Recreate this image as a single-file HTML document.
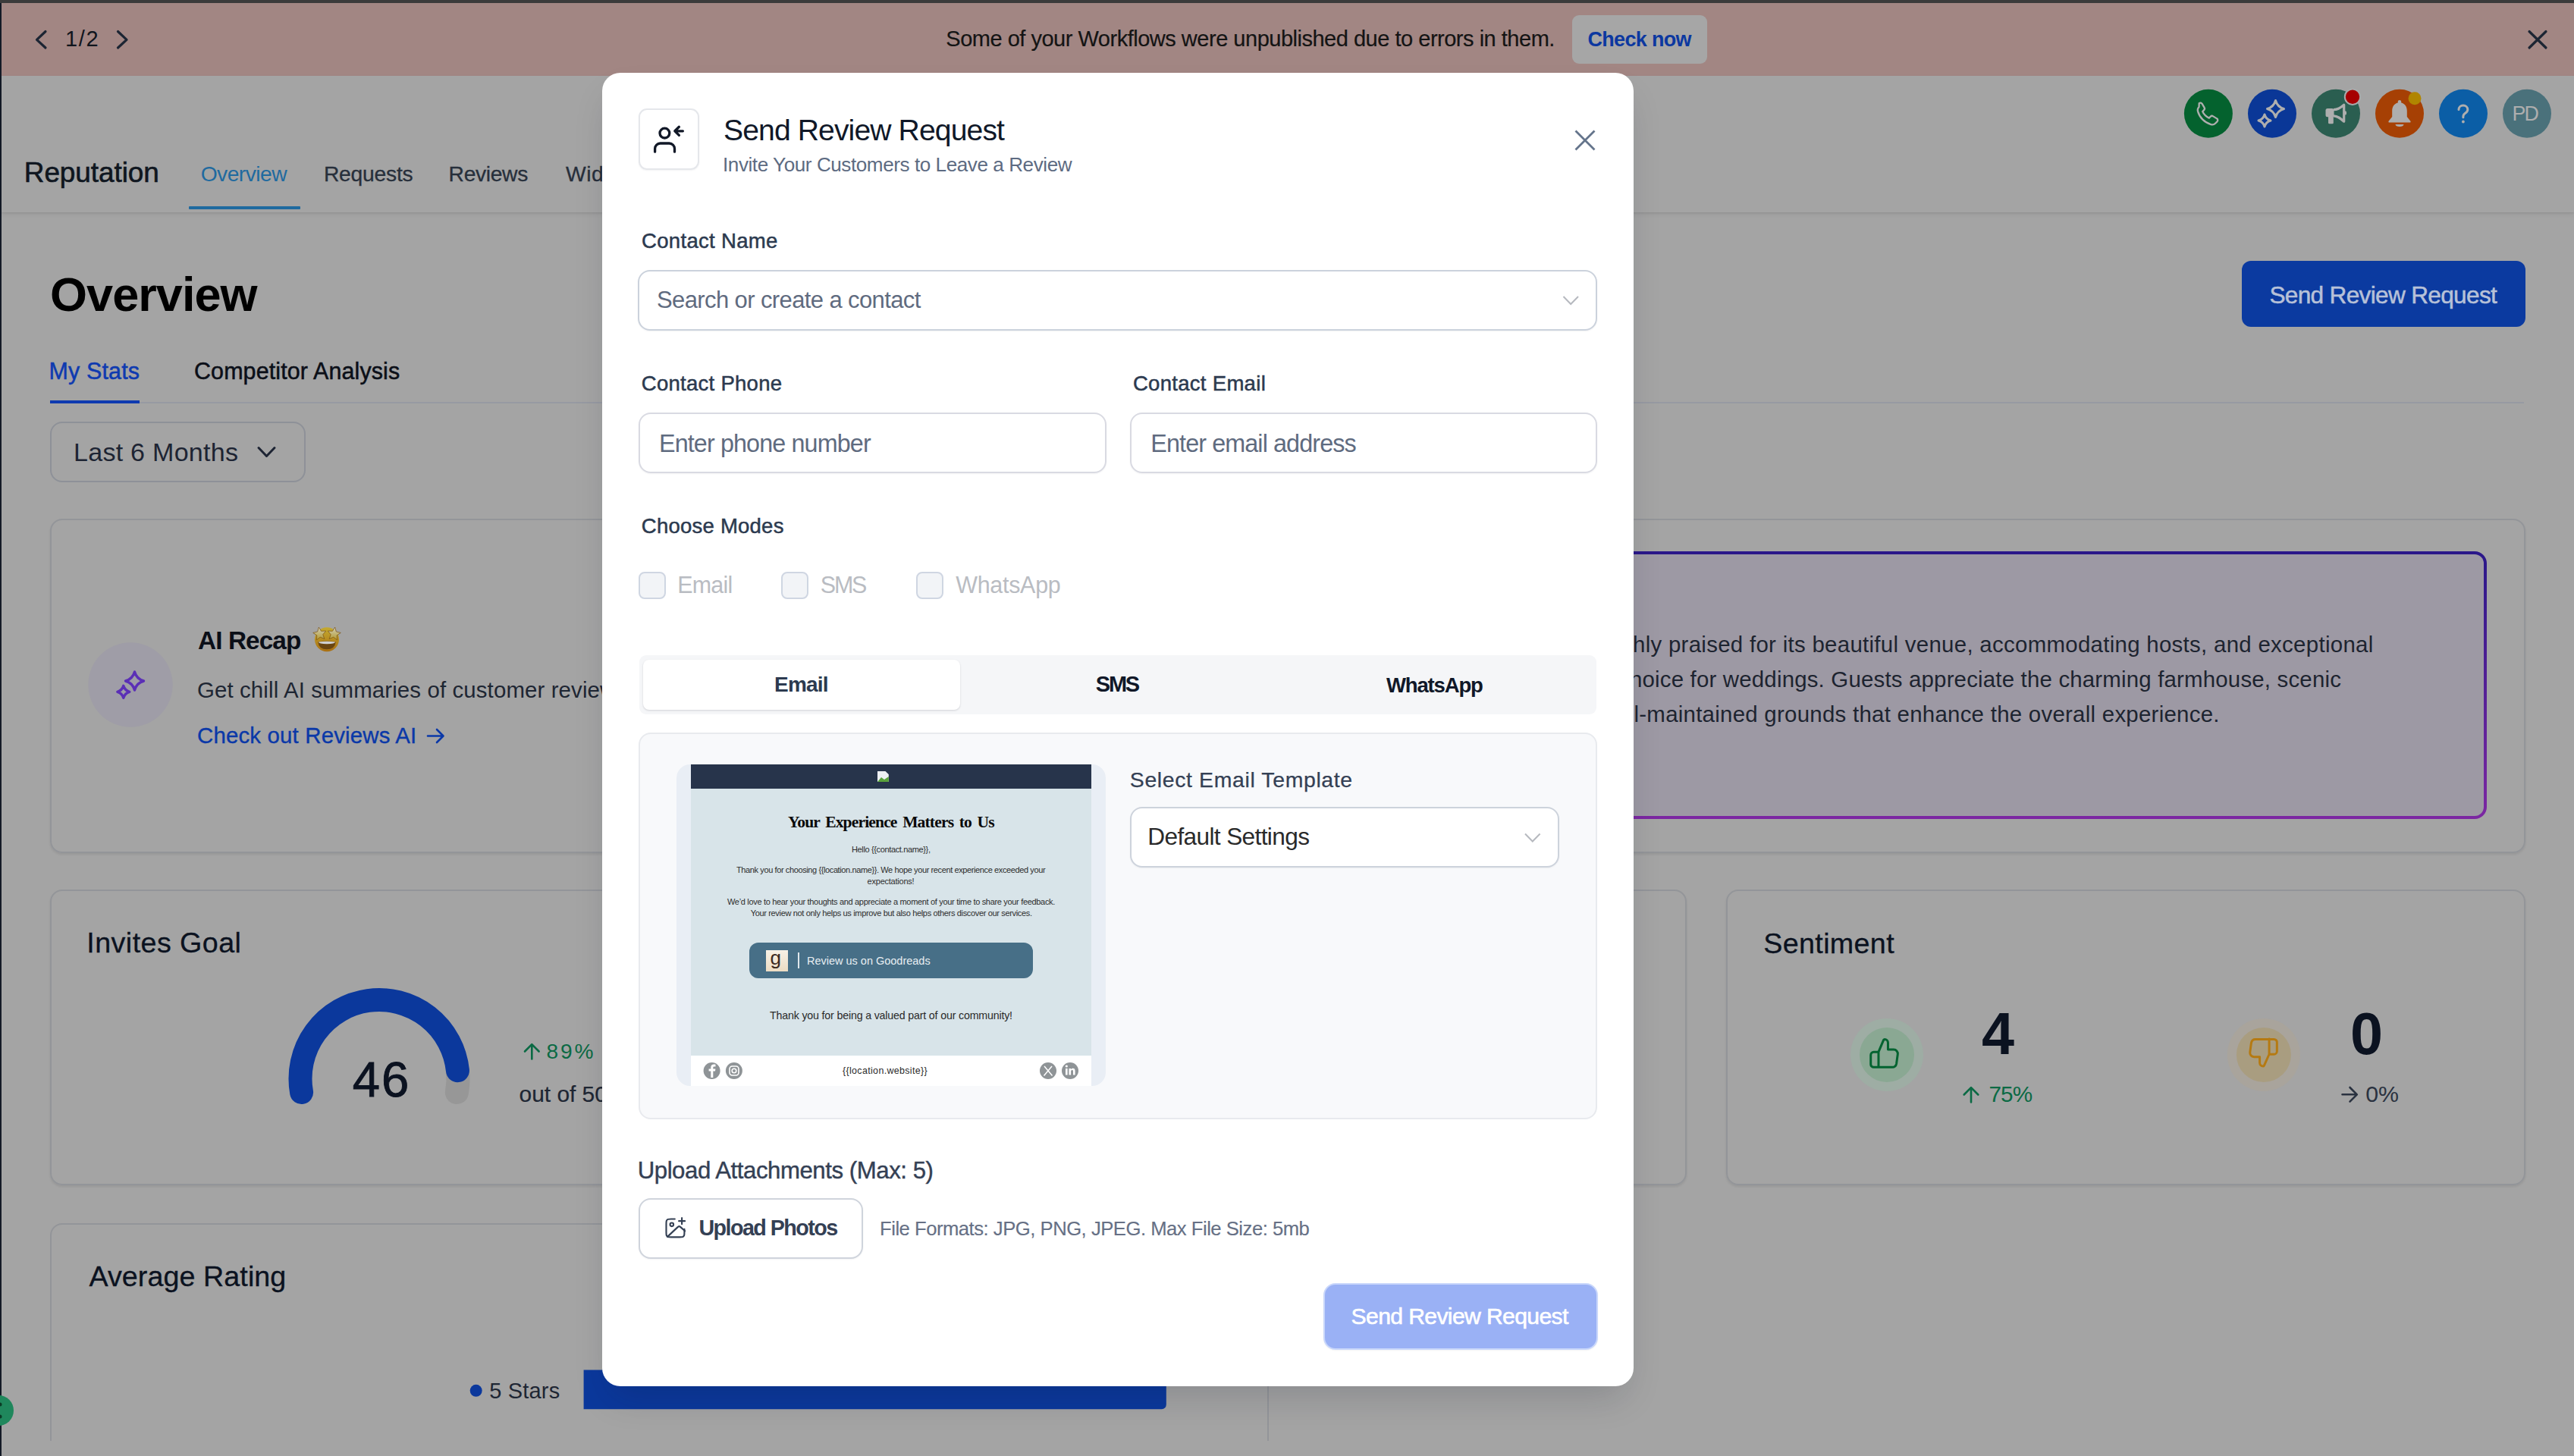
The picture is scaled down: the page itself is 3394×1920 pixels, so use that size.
<!DOCTYPE html>
<html><head><meta charset="utf-8"><style>
html,body{margin:0;padding:0;}
body{width:3394px;height:1920px;overflow:hidden;position:relative;background:#a4a4a4;font-family:'Liberation Sans',sans-serif;}
.a{position:absolute;box-sizing:border-box;}
.t{position:absolute;white-space:nowrap;}
svg{position:absolute;overflow:visible;}
</style></head><body>
<div class="a " style="left:0px;top:0px;width:3394px;height:4px;background:#3b3b3b;"></div>
<div class="a " style="left:0px;top:4px;width:2px;height:1916px;background:#131a26;"></div>
<div class="a " style="left:2px;top:4px;width:3392px;height:96px;background:#a28683;"></div>
<svg style="left:0;top:0" width="3394" height="100"><path d="M60 41.5 L48.5 52.3 L60 63" fill="none" stroke="#1c2533" stroke-width="3.2" stroke-linecap="round" stroke-linejoin="round"/><path d="M155.5 41.5 L167 52.3 L155.5 63" fill="none" stroke="#1c2533" stroke-width="3.2" stroke-linecap="round" stroke-linejoin="round"/><path d="M3335 41.5 L3357 63 M3357 41.5 L3335 63" stroke="#1c2533" stroke-width="3.2" stroke-linecap="round"/></svg>
<div class="t" id="b12" style="left:86px;top:37.41px;font-size:28.99px;line-height:28.99px;color:#10151d;letter-spacing:1.62px;">1/2</div>
<div class="t" id="bmsg" style="left:1247.3px;top:36.61px;font-size:28.99px;line-height:28.99px;color:#141414;letter-spacing:-0.48px;-webkit-text-stroke:0.2px #141414;">Some of your Workflows were unpublished due to errors in them.</div>
<div class="a " style="left:2073px;top:20px;width:178px;height:64px;background:#a6a6a6;border-radius:9px;"></div>
<div class="t" id="bchk" style="left:2093.4px;top:38.6px;font-size:26.96px;line-height:26.96px;color:#0c38a0;font-weight:700;letter-spacing:-0.64px;">Check now</div>
<div class="a " style="left:2px;top:100px;width:3392px;height:180px;background:#a4a4a4;box-shadow:0 1px 2px rgba(0,0,0,0.08),0 3px 6px rgba(0,0,0,0.06);"></div>
<div class="t" id="hrep" style="left:31.8px;top:209.71px;font-size:36.96px;line-height:36.96px;color:#0f1620;letter-spacing:-0.08px;-webkit-text-stroke:0.6px #0f1620;">Reputation</div>
<div class="t" id="hov" style="left:264.7px;top:215.01px;font-size:28.26px;line-height:28.26px;color:#1f6a9f;letter-spacing:-0.55px;">Overview</div>
<div class="a " style="left:248.6px;top:271.7px;width:147px;height:4px;background:#1f6a9f;border-radius:1px;"></div>
<div class="t" id="hreq" style="left:426.9px;top:215.01px;font-size:28.26px;line-height:28.26px;color:#272f3b;letter-spacing:-0.23px;-webkit-text-stroke:0.3px #272f3b;">Requests</div>
<div class="t" id="hrev" style="left:591.6px;top:215.01px;font-size:28.26px;line-height:28.26px;color:#272f3b;letter-spacing:-0.34px;-webkit-text-stroke:0.3px #272f3b;">Reviews</div>
<div class="t" id="hwid" style="left:745.9px;top:215.01px;font-size:28.26px;line-height:28.26px;color:#272f3b;-webkit-text-stroke:0.3px #272f3b;letter-spacing:0.6px;">Widgets</div>
<svg style="left:0;top:0" width="3394" height="300"><circle cx="2911.9" cy="149.8" r="32" fill="#04622e"/><circle cx="2996" cy="149.8" r="32" fill="#0a3797"/><circle cx="3080" cy="149.8" r="32" fill="#2a5e50"/><circle cx="3164" cy="149.8" r="32" fill="#a64004"/><circle cx="3248" cy="149.8" r="32" fill="#0b5ea6"/><circle cx="3332" cy="149.8" r="32" fill="#4a717b"/><g transform="translate(2891.3,131.5) scale(1.87)" fill="none" stroke="#aeaeae" stroke-width="1.25" stroke-linejoin="round"><path d="M4.5 2.5c.6-.5 1.6-.4 2 .3l1.6 2.6c.4.6.3 1.4-.2 1.9l-1 1c.9 2 2.5 3.6 4.6 4.6l1-1c.5-.5 1.3-.6 1.9-.2l2.6 1.6c.7.4.8 1.4.3 2l-1.4 1.4c-.8.8-2 1.1-3.1.7C8.4 16.2 4.8 12.6 3.6 8.2c-.3-1.1 0-2.3.8-3.1z"/></g><path d="M3000.50 132.50 Q3002.92 141.08 3011.50 143.50 Q3002.92 145.92 3000.50 154.50 Q2998.08 145.92 2989.50 143.50 Q2998.08 141.08 3000.50 132.50 Z M2986.00 151.00 Q2987.76 157.24 2994.00 159.00 Q2987.76 160.76 2986.00 167.00 Q2984.24 160.76 2978.00 159.00 Q2984.24 157.24 2986.00 151.00 Z" fill="none" stroke="#aeaeae" stroke-width="3" stroke-linejoin="round"/><g fill="#aeaeae"><rect x="3066.5" y="143.1" width="11" height="11.2" rx="2.5"/><rect x="3070" y="150" width="6.8" height="13.2" rx="1.5"/><rect x="3090.5" y="146.2" width="3.5" height="5.4" rx="1.7"/></g><path d="M3077 144.6 C3082.5 144.6 3086.5 142 3090.7 138.2 V160.2 C3086.5 156.4 3082.5 152.8 3077 152.8" fill="none" stroke="#aeaeae" stroke-width="3.2" stroke-linejoin="round"/><circle cx="3102" cy="127.7" r="10.2" fill="#a60000" stroke="#a9aaaa" stroke-width="2"/><g fill="#aeaeae"><path d="M3164 132 c1.3 0 2.2.9 2.2 2 v1.5 c5 1.3 7.6 5.5 7.6 10.5 v8 l4.6 5.8 c.6.8 0 1.8-.9 1.8 H3150.5 c-.9 0-1.5-1-.9-1.8 l4.6-5.8 v-8 c0-5 2.6-9.2 7.6-10.5 v-1.5 c0-1.1.9-2 2.2-2z"/><path d="M3158.5 164 h11 c0 1.8-2.4 3-5.5 3 s-5.5-1.2-5.5-3z"/></g><circle cx="3184" cy="129.8" r="8.5" fill="#b08500"/><path d="M3242 144.5 c0-3.2 2.6-5.6 5.9-5.6 c3.3 0 5.9 2.4 5.9 5.5 c0 2.4-1.5 3.6-3.2 4.8 c-1.6 1.1-2.7 2-2.7 4.3 v1.2" fill="none" stroke="#aeaeae" stroke-width="3" stroke-linecap="round"/><circle cx="3247.9" cy="160.5" r="1.9" fill="#aeaeae"/></svg>
<div class="t" id="hpd" style="left:3312.4px;top:136.51px;font-size:26.81px;line-height:26.81px;color:#aeaeae;letter-spacing:-1.87px;">PD</div>
<div class="t" id="ovt" style="left:66px;top:357.31px;font-size:63.04px;line-height:63.04px;color:#000000;font-weight:700;letter-spacing:-0.96px;">Overview</div>
<div class="a " style="left:2956px;top:344px;width:374px;height:87px;background:#0b3aa0;border-radius:12px;"></div>
<div class="t" id="srr" style="left:2992.4px;top:374.02px;font-size:31.59px;line-height:31.59px;color:#b7c1d8;letter-spacing:-0.67px;-webkit-text-stroke:0.5px #b7c1d8;">Send Review Request</div>
<div class="t" id="mys" style="left:64.6px;top:473.81px;font-size:30.43px;line-height:30.43px;color:#0e3ab0;letter-spacing:0.15px;-webkit-text-stroke:0.5px #0e3ab0;">My Stats</div>
<div class="t" id="comp" style="left:256px;top:473.81px;font-size:30.43px;line-height:30.43px;color:#0b0f18;letter-spacing:0.13px;-webkit-text-stroke:0.5px #0b0f18;">Competitor Analysis</div>
<div class="a " style="left:66px;top:530px;width:3262px;height:2px;background:#979aa2;"></div>
<div class="a " style="left:66px;top:528px;width:118px;height:4px;background:#0e3ab0;"></div>
<div class="a " style="left:66px;top:556px;width:337px;height:80px;border:2px solid #8e9198;border-radius:16px;"></div>
<div class="t" id="l6m" style="left:97px;top:578.5px;font-size:34.06px;line-height:34.06px;color:#1d2433;letter-spacing:0.26px;">Last 6 Months</div>
<svg style="left:0;top:0" width="400" height="700"><path d="M341 590.5 L351.5 601.5 L362 590.5" fill="none" stroke="#1d2433" stroke-width="3" stroke-linecap="round" stroke-linejoin="round"/></svg>
<div class="a " style="left:66px;top:684px;width:3264px;height:441px;border:2px solid #939599;border-radius:16px;box-shadow:0 2px 3px rgba(0,0,0,0.08);"></div>
<svg style="left:0;top:0" width="800" height="1200"><circle cx="172" cy="903" r="55.7" fill="#9f9da7"/><path d="M177.50 886.00 Q180.14 895.36 189.50 898.00 Q180.14 900.64 177.50 910.00 Q174.86 900.64 165.50 898.00 Q174.86 895.36 177.50 886.00 Z M162.80 904.30 Q164.56 910.54 170.80 912.30 Q164.56 914.06 162.80 920.30 Q161.04 914.06 154.80 912.30 Q161.04 910.54 162.80 904.30 Z" fill="none" stroke="#5b2fb6" stroke-width="3.4" stroke-linejoin="round"/></svg>
<div class="t" id="air" style="left:261px;top:828.3px;font-size:33.33px;line-height:33.33px;color:#0b0f18;font-weight:700;letter-spacing:-0.9px;">AI Recap</div>
<svg style="left:413px;top:826px" width="36" height="36" viewBox="0 0 36 36"><defs><linearGradient id="ef" x1="0" y1="0" x2="0" y2="1"><stop offset="0" stop-color="#c4aa30"/><stop offset="1" stop-color="#a96f12"/></linearGradient><linearGradient id="es" x1="0" y1="0" x2="0" y2="1"><stop offset="0" stop-color="#d2cfb8"/><stop offset="1" stop-color="#b39a30"/></linearGradient></defs><circle cx="18" cy="17.3" r="16" fill="url(#ef)"/><path d="M6.3 20.4 Q18 18.6 29.7 20.4 Q28.6 30.2 18 30.2 Q7.4 30.2 6.3 20.4 Z" fill="#6a4510"/><path d="M7 20.5 Q18 18.9 29 20.5 Q28.6 23.2 18 23.2 Q7.4 23.2 7 20.5 Z" fill="#cfcfcf"/><polygon points="7.35,1.09 10.59,6.27 16.69,6.05 12.77,10.73 14.85,16.47 9.19,14.19 4.37,17.95 4.80,11.85 -0.26,8.44 5.66,6.96" fill="url(#es)" stroke="#7a5010" stroke-width="0.7" stroke-linejoin="round"/><polygon points="28.65,1.09 30.34,6.96 36.26,8.44 31.20,11.85 31.63,17.95 26.81,14.19 21.15,16.47 23.23,10.73 19.31,6.05 25.41,6.27" fill="url(#es)" stroke="#7a5010" stroke-width="0.7" stroke-linejoin="round"/></svg>
<div class="t" id="aisum" style="left:260px;top:895.2px;font-size:29.42px;line-height:29.42px;color:#1e2633;letter-spacing:0.12px;">Get chill AI summaries of customer reviews at a glance</div>
<div class="t" id="aichk" style="left:260px;top:954.91px;font-size:29.42px;line-height:29.42px;color:#0a38a8;letter-spacing:0.17px;-webkit-text-stroke:0.35px #0a38a8;">Check out Reviews AI</div>
<svg style="left:0;top:0" width="800" height="1200"><path d="M564 970.5 H584 M576 962 L584.5 970.5 L576 979" fill="none" stroke="#0a38a8" stroke-width="2.6" stroke-linecap="round" stroke-linejoin="round"/></svg>
<div class="a " style="left:1400px;top:727px;width:1879px;height:353px;border:4px solid transparent;border-radius:16px;background:linear-gradient(#9d99a4,#9d99a4) padding-box,linear-gradient(180deg,#2a1789,#7c27a2) border-box;"></div>
<div class="t" style="left:2155px;top:0;"></div>
<div class="t" id="ail1" style="left:2153px;top:835.01px;font-size:29.42px;line-height:29.42px;color:#1d2430;letter-spacing:0.3px;">hly praised for its beautiful venue, accommodating hosts, and exceptional</div>
<div class="t" id="ail2" style="left:2149px;top:881.41px;font-size:29.42px;line-height:29.42px;color:#1d2430;letter-spacing:0.19px;">hoice for weddings. Guests appreciate the charming farmhouse, scenic</div>
<div class="t" id="ail3" style="left:2154.5px;top:926.7px;font-size:29.42px;line-height:29.42px;color:#1d2430;letter-spacing:0.27px;">l-maintained grounds that enhance the overall experience.</div>
<div class="a " style="left:66px;top:1173px;width:1053px;height:390px;border:2px solid #939599;border-radius:16px;box-shadow:0 2px 3px rgba(0,0,0,0.08);"></div>
<div class="a " style="left:1171px;top:1173px;width:1053px;height:390px;border:2px solid #939599;border-radius:16px;box-shadow:0 2px 3px rgba(0,0,0,0.08);"></div>
<div class="a " style="left:2276px;top:1173px;width:1054px;height:390px;border:2px solid #939599;border-radius:16px;box-shadow:0 2px 3px rgba(0,0,0,0.08);"></div>
<div class="t" id="invg" style="left:114.3px;top:1225.3px;font-size:37.68px;line-height:37.68px;color:#0b1220;letter-spacing:0.43px;-webkit-text-stroke:0.3px #0b1220;">Invites Goal</div>
<svg style="left:0;top:0" width="1200" height="1600"><path d="M603.43 1411.63 A104 104 0 0 1 602.42 1440.56" fill="none" stroke="#979797" stroke-width="31" stroke-linecap="round"/><path d="M397.58 1440.56 A104 104 0 1 1 603.43 1411.63" fill="none" stroke="#0b389c" stroke-width="31" stroke-linecap="round"/></svg>
<div class="t" id="g46" style="left:464.8px;top:1390.7px;font-size:65.22px;line-height:65.22px;color:#0b1220;letter-spacing:1.94px;-webkit-text-stroke:0.9px #0b1220;">46</div>
<svg style="left:0;top:0" width="1200" height="1600"><path d="M701.3 1396.5 V1377.5 M692 1386.5 L701.3 1377.2 L710.6 1386.5" fill="none" stroke="#0b6a44" stroke-width="2.6" stroke-linecap="round" stroke-linejoin="round"/></svg>
<div class="t" id="g89" style="left:720.6px;top:1373.31px;font-size:28.12px;line-height:28.12px;color:#0b6a44;letter-spacing:2.77px;">89%</div>
<div class="t" id="gout" style="left:684.6px;top:1427.6px;font-size:29.86px;line-height:29.86px;color:#1e2633;-webkit-text-stroke:0.2px #1e2633;">out of 50</div>
<div class="t" id="sent" style="left:2325.3px;top:1226.41px;font-size:37.68px;line-height:37.68px;color:#0b1220;letter-spacing:0.34px;-webkit-text-stroke:0.3px #0b1220;">Sentiment</div>
<svg style="left:0;top:0" width="3394" height="1600"><circle cx="2488" cy="1390.9" r="48" fill="#9eada4"/><circle cx="2488" cy="1390.9" r="36" fill="#8aa893"/><circle cx="2984.9" cy="1390.9" r="48" fill="#a9a49c"/><circle cx="2984.9" cy="1390.9" r="36" fill="#a99d80"/><g transform="translate(2465,1367.5) scale(1.8)" fill="none" stroke="#036330" stroke-width="1.75" stroke-linejoin="round" stroke-linecap="round"><path d="M7 23.3V11.5M1 14v7c0 1.2 1 2.3 2.3 2.3h14.3c1.6 0 2.9-1.2 3.2-2.7l1-7.3c.3-1.9-1.2-3.6-3.1-3.6H14.3V4.4c0-1.4-1.2-2.6-2.6-2.6-.3 0-.6.2-.8.5L7 11.5H3.3C2 11.5 1 12.6 1 14z" transform="scale(0.95)"/></g><g transform="translate(2963,1367.5) scale(1.8)" fill="none" stroke="#b57a12" stroke-width="1.75" stroke-linejoin="round" stroke-linecap="round"><path d="M17 1.5v11.8M23 11V4c0-1.2-1-2.3-2.3-2.3H6.4c-1.6 0-2.9 1.2-3.2 2.7l-1 7.3c-.3 1.9 1.2 3.6 3.1 3.6H9.7v4.6c0 1.4 1.2 2.6 2.6 2.6.3 0 .6-.2.8-.5l3.9-8.7h3.7c1.3 0 2.3-1.1 2.3-2.4z" transform="scale(0.95)"/></g><path d="M2599 1453.5 V1434.5 M2589.7 1443.5 L2599 1434.2 L2608.3 1443.5" fill="none" stroke="#0b6a44" stroke-width="2.6" stroke-linecap="round" stroke-linejoin="round"/><path d="M3088.5 1443.3 H3107.5 M3098.5 1434 L3107.8 1443.3 L3098.5 1452.6" fill="none" stroke="#2a3240" stroke-width="2.6" stroke-linecap="round" stroke-linejoin="round"/></svg>
<div class="t" id="s4" style="left:2612.9px;top:1324.61px;font-size:77.39px;line-height:77.39px;color:#0b1220;font-weight:700;">4</div>
<div class="t" id="s75" style="left:2622.4px;top:1427.5px;font-size:29.71px;line-height:29.71px;color:#0b6a44;letter-spacing:-0.82px;">75%</div>
<div class="t" id="s0" style="left:3099px;top:1324.61px;font-size:77.39px;line-height:77.39px;color:#0b1220;font-weight:700;">0</div>
<div class="t" id="s0p" style="left:3119.3px;top:1428.11px;font-size:30.29px;line-height:30.29px;color:#2a3240;letter-spacing:-0.13px;">0%</div>
<div class="a " style="left:66px;top:1613px;width:1607px;height:348px;border:2px solid #939599;border-radius:16px;"></div>
<div class="a " style="left:2px;top:1900px;width:3392px;height:20px;background:#a4a4a4;"></div>
<div class="t" id="avgr" style="left:117.4px;top:1664.71px;font-size:37.68px;line-height:37.68px;color:#0b1220;letter-spacing:0.07px;-webkit-text-stroke:0.3px #0b1220;">Average Rating</div>
<svg style="left:0;top:0" width="1600" height="1920"><circle cx="627.7" cy="1833.8" r="8" fill="#0b389c"/><path d="M769.6 1806.6 H1531.8 A6 6 0 0 1 1537.8 1812.6 V1852.2 A6 6 0 0 1 1531.8 1858.2 H769.6 Z" fill="#0b389c"/></svg>
<div class="t" id="5st" style="left:645.2px;top:1820.3px;font-size:28.99px;line-height:28.99px;color:#1e2633;letter-spacing:0.2px;">5 Stars</div>
<div class="a " style="left:2px;top:1840px;width:0px;height:40px;"></div>
<svg style="left:0;top:0" width="100" height="1920"><circle cx="-2" cy="1860" r="20" fill="#1f875c"/><circle cx="0" cy="1852" r="2.5" fill="#0b3b26"/><circle cx="0" cy="1868" r="2.5" fill="#0b3b26"/></svg>
<div class="a " style="left:794px;top:95.5px;width:1360px;height:1732px;background:#ffffff;border-radius:24px;box-shadow:0 24px 48px -12px rgba(16,24,40,0.18);"></div>
<div class="a " style="left:842px;top:143px;width:80px;height:81px;border:2px solid #e5e7eb;border-radius:11px;box-shadow:0 1px 2px rgba(16,24,40,0.05);"></div>
<svg style="left:0;top:0" width="2200" height="300"><g fill="none" stroke="#111827" stroke-width="3.3" stroke-linecap="round" stroke-linejoin="round"><circle cx="876.4" cy="175.6" r="6.4"/><path d="M863.6 200.2 V196 A7 7 0 0 1 870.6 189 H882.5 A7 7 0 0 1 889.5 196 V200.2"/><path d="M889.8 172.8 H900.4 M895.4 167.3 L889.8 172.8 L895.4 178.4"/></g><path d="M2078.5 173.5 L2101.5 196.5 M2101.5 173.5 L2078.5 196.5" stroke="#64748b" stroke-width="2.8" stroke-linecap="square"/></svg>
<div class="t" id="mtit" style="left:954px;top:152.01px;font-size:39.13px;line-height:39.13px;color:#101828;letter-spacing:-0.9px;">Send Review Request</div>
<div class="t" id="msub" style="left:953px;top:204px;font-size:26.09px;line-height:26.09px;color:#5d6b82;letter-spacing:-0.43px;">Invite Your Customers to Leave a Review</div>
<div class="t" id="lcn" style="left:846px;top:304.01px;font-size:27.54px;line-height:27.54px;color:#2c3a4f;letter-spacing:0.31px;-webkit-text-stroke:0.5px #2c3a4f;">Contact Name</div>
<div class="a " style="left:841px;top:356px;width:1265px;height:80px;border:2px solid #cbd2dc;border-radius:16px;box-shadow:0 1px 2px rgba(16,24,40,0.05);"></div>
<div class="t" id="phs" style="left:866px;top:380.02px;font-size:31.01px;line-height:31.01px;color:#5f6b7f;letter-spacing:-0.61px;">Search or create a contact</div>
<svg style="left:0;top:0" width="2200" height="500"><path d="M2061.5 391 L2071.2 401 L2081 391" fill="none" stroke="#b6b9bf" stroke-width="2"/></svg>
<div class="t" id="lcp" style="left:845.8px;top:492.01px;font-size:27.54px;line-height:27.54px;color:#2c3a4f;letter-spacing:0.26px;-webkit-text-stroke:0.5px #2c3a4f;">Contact Phone</div>
<div class="t" id="lce" style="left:1493.9px;top:492.01px;font-size:27.54px;line-height:27.54px;color:#2c3a4f;letter-spacing:0.29px;-webkit-text-stroke:0.5px #2c3a4f;">Contact Email</div>
<div class="a " style="left:842px;top:544px;width:617px;height:80px;border:2px solid #d9dae2;border-radius:16px;box-shadow:0 1px 2px rgba(16,24,40,0.05);"></div>
<div class="a " style="left:1490px;top:544px;width:616px;height:80px;border:2px solid #d9dae2;border-radius:16px;box-shadow:0 1px 2px rgba(16,24,40,0.05);"></div>
<div class="t" id="php" style="left:869px;top:569.01px;font-size:32.32px;line-height:32.32px;color:#5f6b7f;letter-spacing:-0.88px;">Enter phone number</div>
<div class="t" id="pem" style="left:1517.3px;top:569.01px;font-size:32.32px;line-height:32.32px;color:#5f6b7f;letter-spacing:-0.89px;">Enter email address</div>
<div class="t" id="lcm" style="left:845.8px;top:680.01px;font-size:27.54px;line-height:27.54px;color:#2c3a4f;letter-spacing:0.22px;-webkit-text-stroke:0.5px #2c3a4f;">Choose Modes</div>
<div class="a " style="left:842px;top:754px;width:36px;height:36px;border:2px solid #cfd6e2;background:#f2f4f7;border-radius:8px;"></div>
<div class="a " style="left:1030px;top:754px;width:36px;height:36px;border:2px solid #cfd6e2;background:#f2f4f7;border-radius:8px;"></div>
<div class="a " style="left:1208px;top:754px;width:36px;height:36px;border:2px solid #cfd6e2;background:#f2f4f7;border-radius:8px;"></div>
<div class="t" id="cbe" style="left:893.2px;top:756.01px;font-size:30.43px;line-height:30.43px;color:#b9bcc2;letter-spacing:-0.75px;">Email</div>
<div class="t" id="cbs" style="left:1081.8px;top:756.01px;font-size:30.43px;line-height:30.43px;color:#b9bcc2;letter-spacing:-2.17px;">SMS</div>
<div class="t" id="cbw" style="left:1260.2px;top:756.01px;font-size:30.43px;line-height:30.43px;color:#b9bcc2;letter-spacing:-0.26px;">WhatsApp</div>
<div class="a " style="left:842.5px;top:863.8px;width:1262.9px;height:77.9px;background:#f5f6f8;border-radius:9px;"></div>
<div class="a " style="left:847.7px;top:869.9px;width:418.8px;height:65.7px;background:#ffffff;border-radius:8px;box-shadow:0 1px 3px rgba(16,24,40,0.10),0 1px 2px rgba(16,24,40,0.06);"></div>
<div class="t" id="tbe" style="left:1021.1px;top:889px;font-size:27.97px;line-height:27.97px;color:#2c3a4f;font-weight:700;letter-spacing:-0.79px;">Email</div>
<div class="t" id="tbs" style="left:1444.8px;top:888px;font-size:28.99px;line-height:28.99px;color:#101828;font-weight:700;letter-spacing:-2.23px;">SMS</div>
<div class="t" id="tbw" style="left:1828px;top:889.51px;font-size:27.54px;line-height:27.54px;color:#101828;font-weight:700;letter-spacing:-1.18px;">WhatsApp</div>
<div class="a " style="left:842px;top:966px;width:1264px;height:510px;background:#f8f9fb;border:2px solid #e8eaee;border-radius:16px;"></div>
<div class="a " style="left:892.4px;top:1007.9px;width:565.6px;height:423.9px;background:#e9eef5;border-radius:18px;"></div>
<div class="a " style="left:911.1px;top:1007.9px;width:527.7px;height:32.1px;background:#27344b;"></div>
<div class="a " style="left:911.1px;top:1040px;width:527.7px;height:352.4px;background:#d8e4e9;"></div>
<div class="a " style="left:911.1px;top:1392.4px;width:527.7px;height:39.4px;background:#ffffff;"></div>
<svg style="left:0;top:0" width="2200" height="1500"><path d="M1157 1017 H1167.5 L1171.8 1021.3 V1031 H1157 Z" fill="#eef0f3"/><path d="M1157 1031 L1162 1025 L1166 1028 L1171.8 1024 V1031 Z" fill="#5aa23c"/></svg>
<div class="t" id="e1" style="left:1038.9px;top:1074.31px;font-size:21.54px;line-height:21.54px;color:#0a0a0a;font-weight:700;font-family:'Liberation Serif',serif;letter-spacing:-0.84px;word-spacing:3px;">Your Experience Matters to Us</div>
<div class="t" id="e2" style="left:1123px;top:1115.02px;font-size:11.01px;line-height:11.01px;color:#2d2d2d;letter-spacing:-0.36px;">Hello {{contact.name}},</div>
<div class="t" id="e3" style="left:971px;top:1142.02px;font-size:11.01px;line-height:11.01px;color:#2d2d2d;letter-spacing:-0.39px;">Thank you for choosing {{location.name}}. We hope your recent experience exceeded your</div>
<div class="t" id="e4" style="left:1143.6px;top:1157.02px;font-size:11.01px;line-height:11.01px;color:#2d2d2d;letter-spacing:-0.23px;">expectations!</div>
<div class="t" id="e5" style="left:959px;top:1184.3px;font-size:11.01px;line-height:11.01px;color:#2d2d2d;letter-spacing:-0.32px;">We’d love to hear your thoughts and appreciate a moment of your time to share your feedback.</div>
<div class="t" id="e6" style="left:989.7px;top:1199.41px;font-size:11.01px;line-height:11.01px;color:#2d2d2d;letter-spacing:-0.34px;">Your review not only helps us improve but also helps others discover our services.</div>
<div class="a " style="left:987.5px;top:1243px;width:374.7px;height:47.3px;background:#476f87;border-radius:12px;"></div>
<div class="a " style="left:1010.2px;top:1252.7px;width:28.7px;height:28.1px;background:linear-gradient(180deg,#f7f1e6,#ecdcc3);"></div>
<div class="t" id="eg" style="left:1015.5px;top:1255.3px;font-size:17.39px;line-height:17.39px;color:#3b2a1f;font-size:26px;">g</div>
<div class="a " style="left:1052.3px;top:1256px;width:1.5px;height:20.8px;background:#dfe7ec;"></div>
<div class="t" id="e7" style="left:1064px;top:1260.31px;font-size:14.49px;line-height:14.49px;color:#e8eef2;">Review us on Goodreads</div>
<div class="t" id="e8" style="left:1015px;top:1332.01px;font-size:14.2px;line-height:14.2px;color:#2a2a2a;letter-spacing:-0.16px;">Thank you for being a valued part of our community!</div>
<div class="t" id="e9" style="left:1111px;top:1406px;font-size:12.46px;line-height:12.46px;color:#2a2a2a;letter-spacing:0.34px;">{{location.website}}</div>
<svg style="left:0;top:0" width="2200" height="1500"><g fill="#8f9497"><circle cx="938.6" cy="1412" r="11"/><circle cx="967.9" cy="1412" r="11"/><circle cx="1382" cy="1412" r="11"/><circle cx="1411" cy="1412" r="11"/></g><path d="M940.3 1421 V1412.5 H943 L943.4 1409.5 H940.3 V1407.8 C940.3 1407 940.6 1406.4 941.7 1406.4 H943.5 V1403.8 C943 1403.7 942.2 1403.6 941.3 1403.6 C938.9 1403.6 937.3 1405 937.3 1407.6 V1409.5 H934.6 V1412.5 H937.3 V1421 Z" fill="#ffffff"/><rect x="962" y="1406" width="12" height="12" rx="3.5" fill="none" stroke="#fff" stroke-width="1.6"/><circle cx="968" cy="1412" r="2.8" fill="none" stroke="#fff" stroke-width="1.6"/><path d="M1377 1406 L1387.5 1418.5 M1387 1406 L1376.5 1418.5" stroke="#fff" stroke-width="1.5"/><rect x="1405" y="1409" width="2.6" height="8.5" fill="#fff"/><circle cx="1406.3" cy="1406" r="1.6" fill="#fff"/><path d="M1409.5 1417.5 V1409 H1412 V1410.3 C1412.6 1409.3 1413.6 1408.8 1414.8 1408.8 C1416.6 1408.8 1417.6 1409.9 1417.6 1412.2 V1417.5 H1415 V1412.7 C1415 1411.5 1414.6 1411 1413.7 1411 C1412.7 1411 1412.1 1411.7 1412.1 1412.9 V1417.5 Z" fill="#fff"/></svg>
<div class="t" id="lset" style="left:1489.8px;top:1013.61px;font-size:28.41px;line-height:28.41px;color:#344054;letter-spacing:0.64px;-webkit-text-stroke:0.25px #344054;">Select Email Template</div>
<div class="a " style="left:1490px;top:1064px;width:566px;height:80px;background:#fff;border:2px solid #cdd3dc;border-radius:16px;box-shadow:0 1px 2px rgba(16,24,40,0.05);"></div>
<div class="t" id="dset" style="left:1513.3px;top:1087.8px;font-size:31.59px;line-height:31.59px;color:#2a2a2a;letter-spacing:-0.62px;">Default Settings</div>
<svg style="left:0;top:0" width="2200" height="1500"><path d="M2011 1099.5 L2020.8 1109.5 L2030.6 1099.5" fill="none" stroke="#b6b9bf" stroke-width="2"/></svg>
<div class="t" id="lupa" style="left:840.7px;top:1527.51px;font-size:31.16px;line-height:31.16px;color:#344054;letter-spacing:-0.44px;-webkit-text-stroke:0.4px #344054;">Upload Attachments (Max: 5)</div>
<div class="a " style="left:842px;top:1580px;width:296px;height:80px;background:#fff;border:2px solid #cfd4dc;border-radius:16px;box-shadow:0 1px 2px rgba(16,24,40,0.05);"></div>
<svg style="left:0;top:0" width="2200" height="1700"><g transform="translate(874.5,1603.5) scale(1.33)" fill="none" stroke="#344054" stroke-width="1.6" stroke-linecap="round" stroke-linejoin="round"><path d="M11.5 3H7.8C6.1 3 5.3 3 4.6 3.3c-.6.3-1 .7-1.3 1.3C3 5.3 3 6.1 3 7.8v8.4c0 1.7 0 2.5.3 3.2.3.6.7 1 1.3 1.3.7.3 1.5.3 3.2.3h8.4c1.7 0 2.5 0 3.2-.3.6-.3 1-.7 1.3-1.3.3-.7.3-1.5.3-3.2v-3.2"/><circle cx="8.5" cy="8.5" r="1.7"/><path d="M4.2 20.6L14.4 11c.5-.4.7-.6 1-.7.3-.1.5-.1.8 0 .3.1.5.3 1 .7l4.3 3.9M18.5 2v6M15.5 5h6"/></g></svg>
<div class="t" id="upph" style="left:921.4px;top:1605.3px;font-size:28.7px;line-height:28.7px;color:#344054;font-weight:700;letter-spacing:-1.55px;">Upload Photos</div>
<div class="t" id="ffmt" style="left:1160px;top:1607.51px;font-size:25.65px;line-height:25.65px;color:#667085;letter-spacing:-0.49px;-webkit-text-stroke:0.15px #667085;">File Formats: JPG, PNG, JPEG. Max File Size: 5mb</div>
<div class="a " style="left:1745px;top:1692px;width:362px;height:88px;background:#9ab1f5;border:2px solid #c9d7fb;border-radius:16px;box-shadow:0 1px 2px rgba(16,24,40,0.05);"></div>
<div class="t" id="sbtn" style="left:1781.6px;top:1721px;font-size:30.14px;line-height:30.14px;color:#ffffff;letter-spacing:-0.63px;-webkit-text-stroke:0.6px #ffffff;">Send Review Request</div>
</body></html>
